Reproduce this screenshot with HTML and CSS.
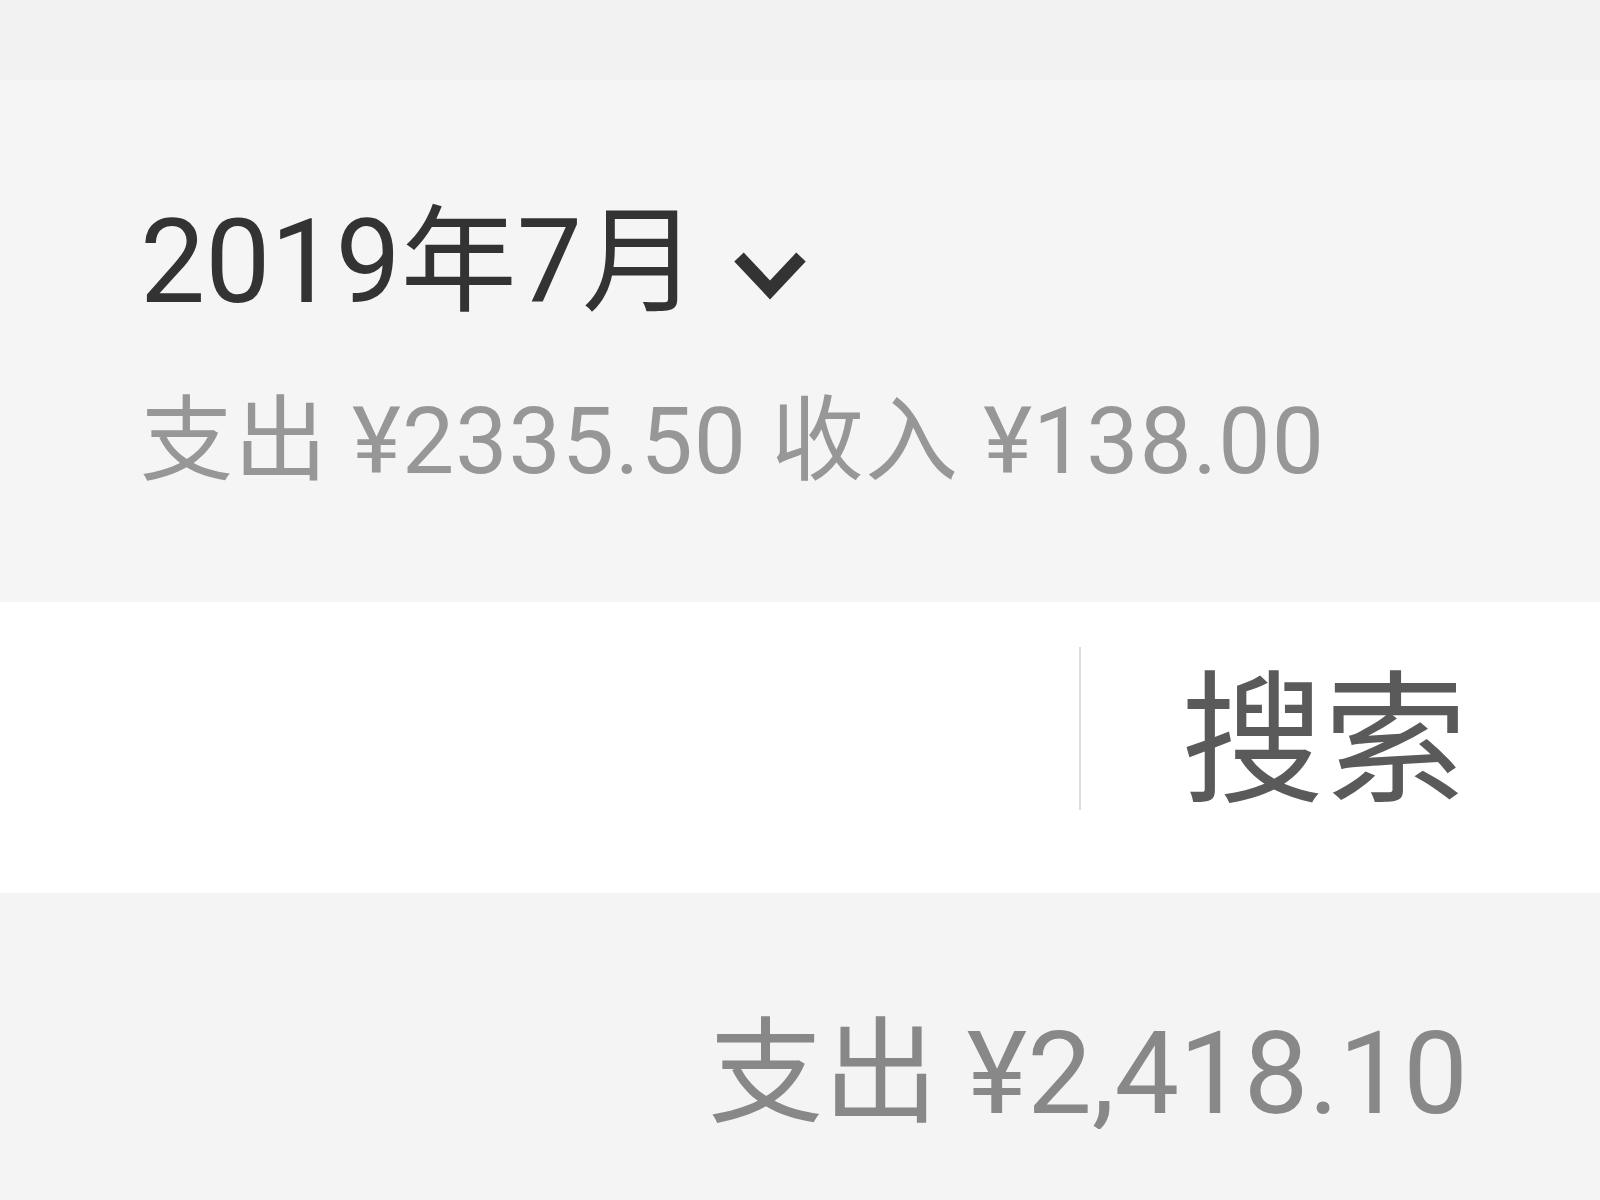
FILE: index.html
```html
<!DOCTYPE html>
<html lang="zh-CN">
<head>
    <meta charset="UTF-8">
    <meta name="viewport" content="width=device-width, initial-scale=1.0">
    <title>账单</title>
    <link rel="stylesheet" href="styles.css">
</head>
<body>
    <div class="top-bar"></div>

    <!-- 月份汇总 -->
    <div class="summary">
        <div class="month">
            <span>2019年7月</span>
            <svg class="chevron" viewBox="0 0 76 50" width="76" height="50">
                <polyline points="7,6 38,39 69,6" fill="none" stroke="#333333" stroke-width="13"/>
            </svg>
        </div>
        <div class="totals">支出 ¥2335.50 收入 ¥138.00</div>
    </div>

    <!-- 搜索栏 -->
    <div class="search-bar">
        <input type="text" class="search-input">
        <div class="divider"></div>
        <button type="button" class="search-button">搜索</button>
    </div>

    <div class="day-row">
        <span class="day-total">支出 ¥2,418.10</span>
    </div>
</body>
</html>
```

FILE: styles.css
```css
body {
    margin: 0;
    font-family: Roboto, "Noto Sans CJK SC", sans-serif;
    background-color: #f4f4f4;
}

.top-bar {
    height: 80px;
    background-color: #f2f2f2;
}

.summary {
    height: 522px;
    box-sizing: border-box;
    padding: 124px 0 0 140px;
    background-color: #f5f5f5;
}

.month {
    display: flex;
    align-items: center;
    gap: 34px;
    font-size: 116px;
    line-height: 116px;
    color: #333333;
}

.chevron {
    margin-top: 28px;
}

.totals {
    margin-top: 66px;
    font-size: 93px;
    line-height: 112px;
    letter-spacing: 1px;
    color: #979797;
}

.search-bar {
    display: flex;
    align-items: center;
    height: 291px;
    background-color: #ffffff;
}

.search-input {
    flex: 1;
    height: 100%;
    border: none;
    outline: none;
    background: transparent;
}

.divider {
    width: 2px;
    height: 163px;
    margin-bottom: 38px;
    background-color: #dddddd;
}

.search-button {
    border: none;
    background: transparent;
    padding: 0 133px 10px 100px;
    font-family: inherit;
    font-size: 143px;
    line-height: 1;
    color: #5a5a5a;
}

.day-row {
    display: flex;
    justify-content: flex-end;
    padding: 126px 132px 0 0;
}

.day-total {
    font-size: 115px;
    line-height: 110px;
    color: #888888;
}
```
